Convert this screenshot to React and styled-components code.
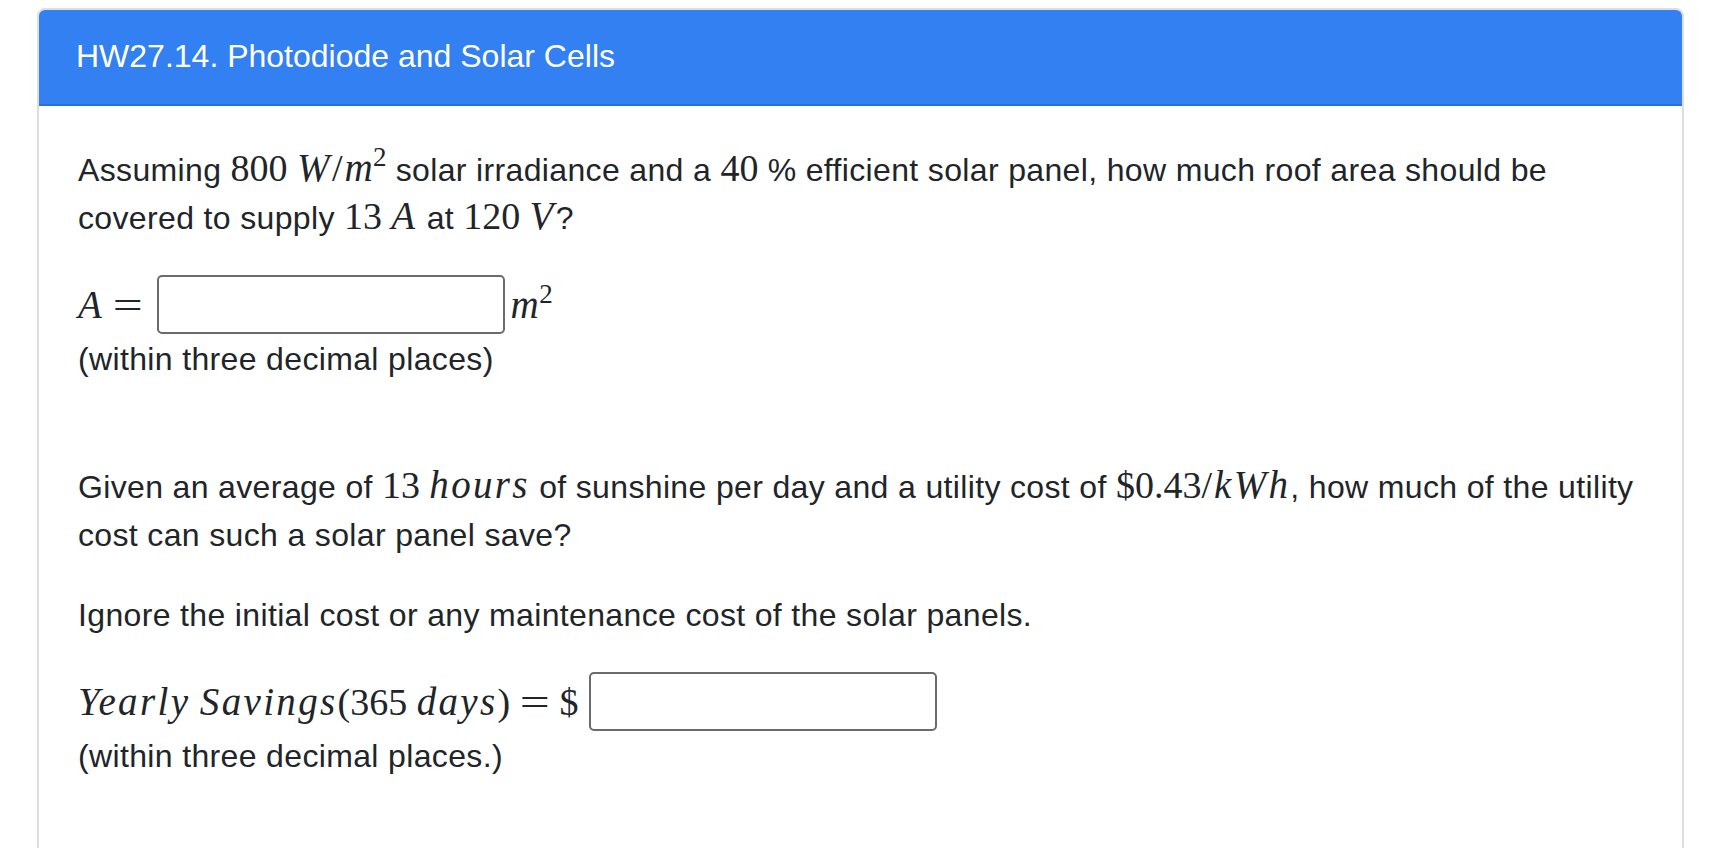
import styled, { createGlobalStyle } from 'styled-components';

const GlobalStyle = createGlobalStyle`
  html, body {
    margin: 0;
    padding: 0;
    background: #ffffff;
    overflow: hidden;
  }

  body {
    font-family: "Liberation Sans", Arial, sans-serif;
    color: #212529;
  }
`;

const Page = styled.div`
  padding: 8px 48px 0 37px;
  height: 848px;
  box-sizing: border-box;
`;

const Card = styled.section`
  border: 2px solid #dedede;
  border-radius: 8px;
  min-height: 960px;
  background: #ffffff;
  overflow: hidden;
`;

const CardHeader = styled.header`
  background-color: #3380f2;
  color: #ffffff;
  padding: 24px 40px 24px 39px;
  font-size: 32px;
  line-height: 48px;
  border-bottom: 2px solid #2f70d4;
  margin: -2px -2px 0;
  border-radius: 8px 8px 0 0;
`;

const CardBody = styled.div`
  padding: 40px 36px 40px 39px;
  font-size: 32px;
  line-height: 48px;
  letter-spacing: 0.35px;
`;

const Paragraph = styled.p`
  margin: 0 0 ${(p) => p.$gap ?? 32}px;
`;

/* a run of typeset maths: upright digits/symbols, serif face */
const Math = styled.span`
  font-family: "Liberation Serif", "DejaVu Serif", serif;
  font-size: 38px;
  line-height: 1;
  letter-spacing: 0;
  white-space: nowrap;
`;

/* an italic math identifier */
const Var = styled.span`
  font-style: italic;
  font-size: 39px;
  letter-spacing: 0.06em;
  margin-right: ${(p) => p.$gap ?? 0}px;
`;

const Slash = styled.span`
  margin: 0 2px 0 0;
`;

const Sup = styled.sup`
  font-style: normal;
  font-size: 27px;
  line-height: 0;
  position: relative;
  top: -1px;
  margin-left: 1px;
`;

const Rel = styled.span`
  display: inline-block;
  transform: scaleX(1.4);
  margin: 0 ${(p) => p.$space ?? 14}px;
`;

const InputRow = styled.div`
  display: flex;
  align-items: center;
  height: 61px;
`;

const Answer = styled.input`
  width: 348px;
  height: 59px;
  box-sizing: border-box;
  border: 2px solid #6b6b6b;
  border-radius: 5px;
  margin: 0 ${(p) => p.$after ?? 0}px 0 ${(p) => p.$before ?? 0}px;
  padding: 0 12px;
  font-size: 28px;
  outline: none;
  background: #ffffff;
`;

const Hint = styled.div`
  margin: 0 0 ${(p) => p.$gap ?? 0}px;
`;

export default function App() {
  return (
    <>
      <GlobalStyle />
      <Page>
        <Card>
          <CardHeader>HW27.14. Photodiode and Solar Cells</CardHeader>
          <CardBody>
            <Paragraph>
              Assuming{' '}
              <Math>
                800 <Var>W</Var>
                <Slash>/</Slash>
                <Var $gap={-3}>m</Var>
                <Sup>2</Sup>
              </Math>{' '}
              solar irradiance and a <Math>40</Math> % efficient solar panel, how much roof area should be covered to
              supply <Math>13</Math> <Math><Var>A</Var></Math> at <Math>120</Math> <Math><Var>V</Var></Math>?
            </Paragraph>

            <InputRow>
              <Math>
                <Var>A</Var>
                <Rel $space={13}>=</Rel>
              </Math>
              <Answer type="text" aria-label="A" $before={5} $after={6} />
              <Math>
                <Var $gap={-3}>m</Var>
                <Sup>2</Sup>
              </Math>
            </InputRow>
            <Hint $gap={80}>(within three decimal places)</Hint>

            <Paragraph>
              Given an average of <Math>13</Math> <Math><Var>hours</Var></Math> of sunshine per day and a utility cost
              of{' '}
              <Math>
                $0.43<Slash>/</Slash>
                <Var>kWh</Var>
              </Math>
              , how much of the utility cost can such a solar panel save?
            </Paragraph>

            <Paragraph>Ignore the initial cost or any maintenance cost of the solar panels.</Paragraph>

            <InputRow>
              <Math>
                <Var>Yearly</Var> <Var>Savings</Var>(365 <Var>days</Var>)<Rel>=</Rel>$
              </Math>
              <Answer type="text" aria-label="Yearly savings" $before={10} />
            </InputRow>
            <Hint>(within three decimal places.)</Hint>
          </CardBody>
        </Card>
      </Page>
    </>
  );
}
